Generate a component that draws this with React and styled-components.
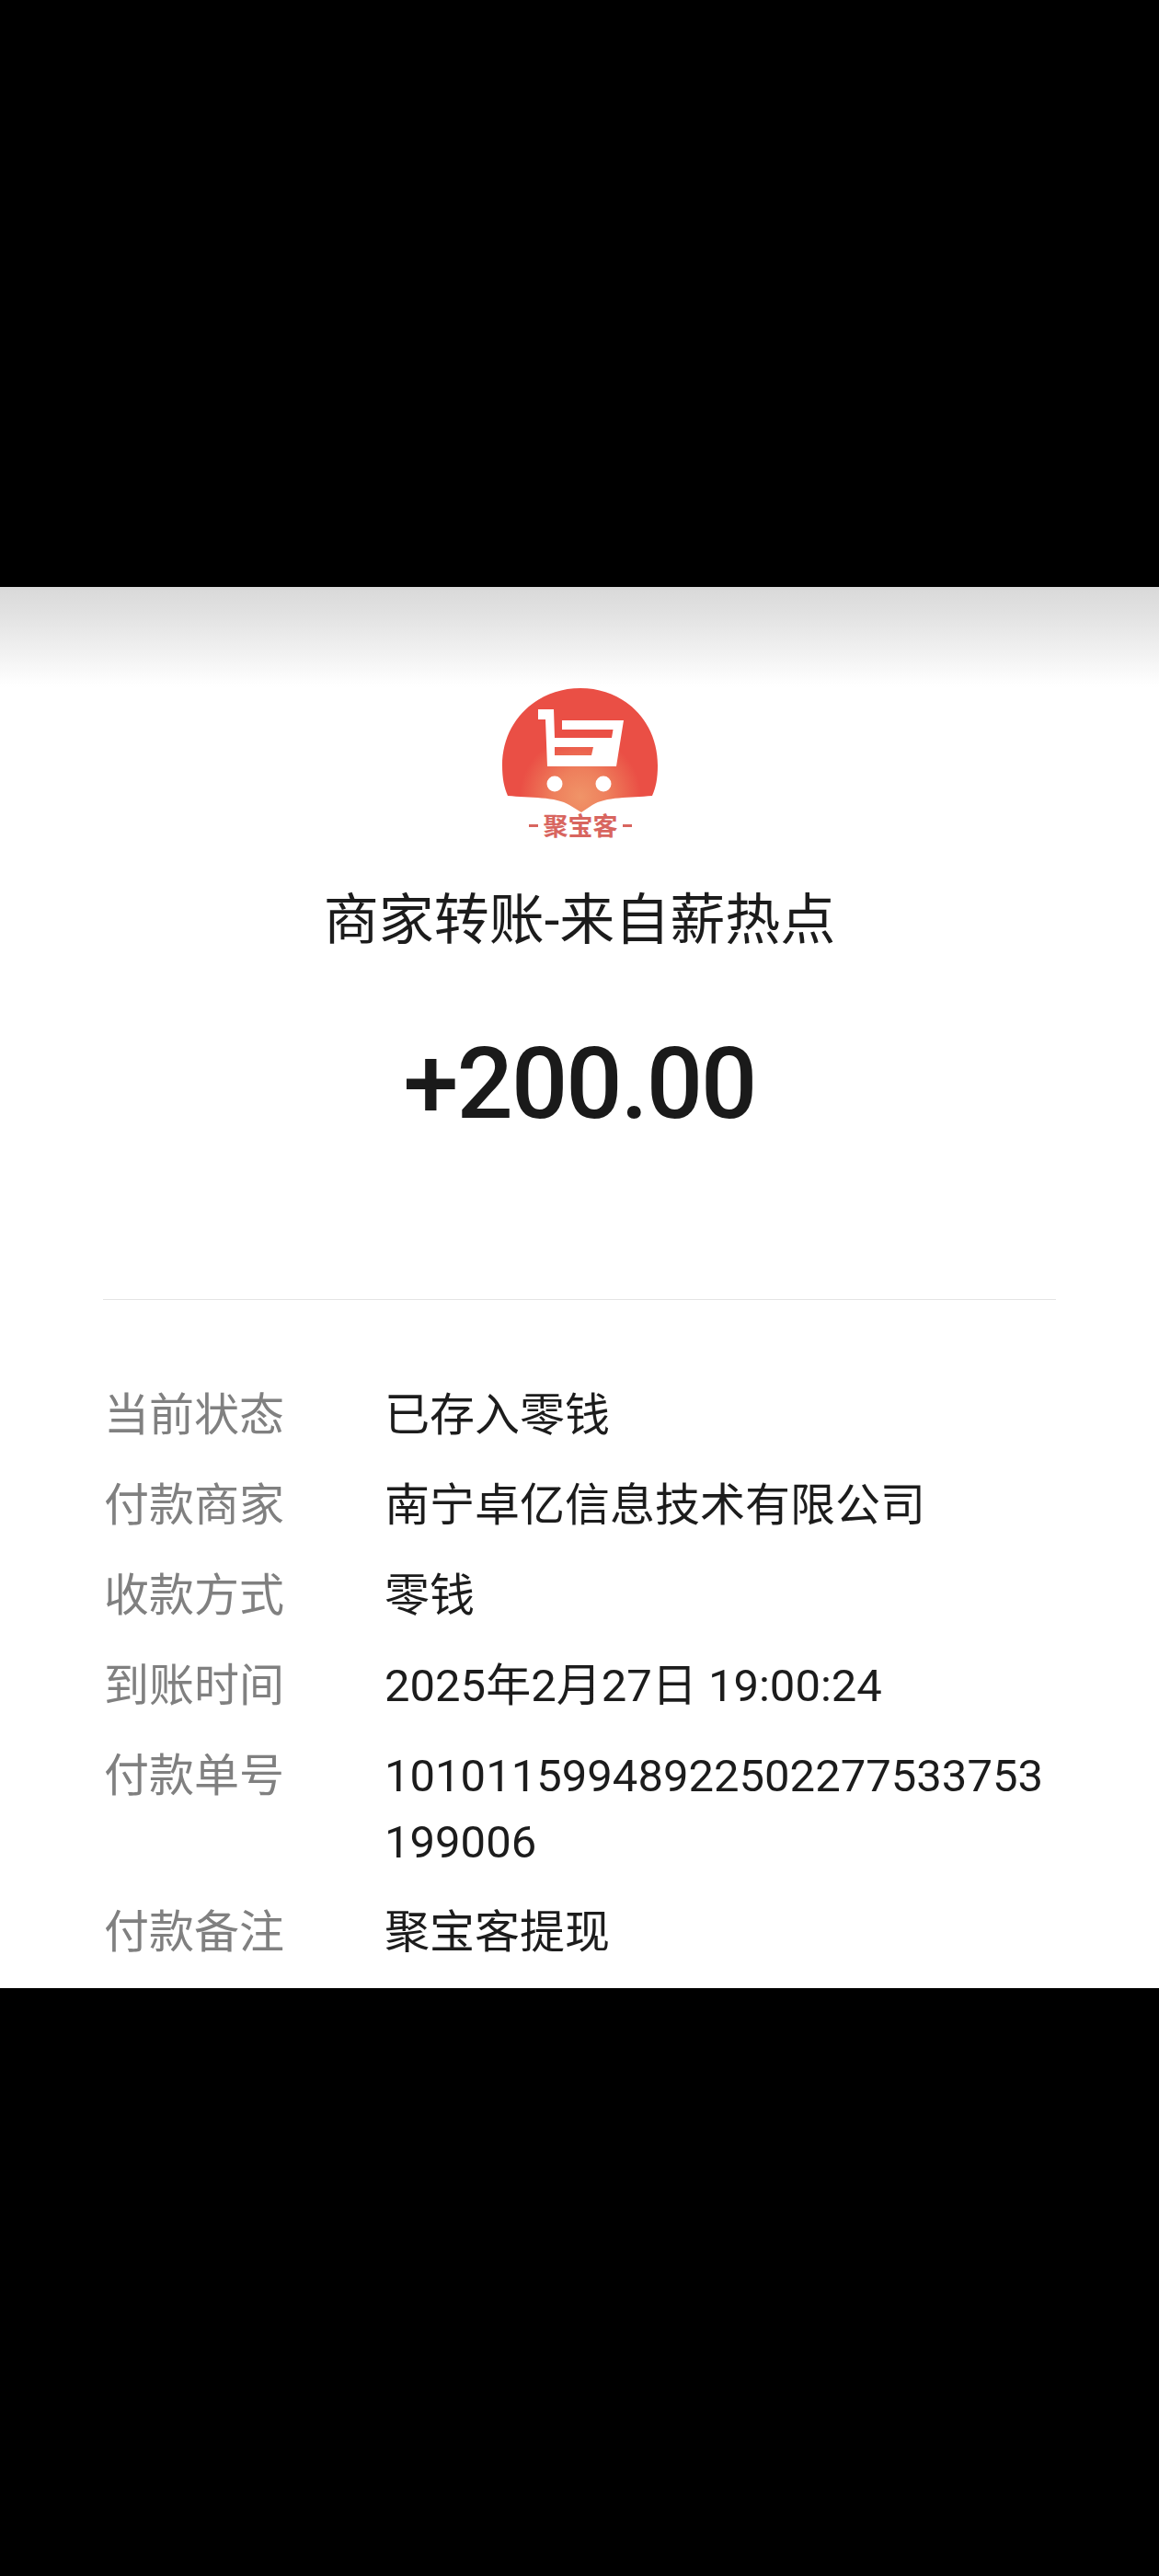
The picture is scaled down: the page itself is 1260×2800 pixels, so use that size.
import React from 'react';
import styled, { createGlobalStyle } from 'styled-components';

const GlobalStyle = createGlobalStyle`
	html, body {
		margin: 0;
		padding: 0;
		background: #000;
	}
	body {
		font-family: Roboto, "Noto Sans CJK SC", sans-serif;
	}
`;

const Screen = styled.div`
	width: 1260px;
	height: 2800px;
	padding-top: 638px;
	box-sizing: border-box;
	background: #000;
`;

const Sheet = styled.main`
	height: 1523px;
	box-sizing: border-box;
	padding-top: 110px;
	display: flex;
	flex-direction: column;
	align-items: center;
	background: linear-gradient(#d9d9d9 0, #e2e2e2 30px, #fefefe 105px, #fff 110px);
`;

const Logo = styled.svg`
	display: block;
	width: 172px;
	height: 168px;
`;

const Title = styled.h1`
	margin: 49px 0 0;
	font-size: 60px;
	line-height: 72px;
	font-weight: 400;
	color: #1c1c1c;
`;

const Amount = styled.div`
	margin-top: 81px;
	font-size: 108px;
	line-height: 120px;
	font-weight: 500;
	letter-spacing: -2px;
	color: #1a1a1a;
`;

const Divider = styled.hr`
	align-self: stretch;
	margin: 174px 112px 0;
	border: 0;
	height: 1px;
	background: #e4e4e4;
`;

const Details = styled.dl`
	align-self: stretch;
	margin: 90px 112px 0 113px;
	display: grid;
	grid-template-columns: 305px 1fr;
	row-gap: 26px;
	font-size: 49px;
	line-height: 72px;
`;

const Label = styled.dt`
	color: #808080;
`;

const Value = styled.dd`
	margin: 0;
	color: #1c1c1c;
	word-break: break-all;
`;

const rows = [
	{ label: '当前状态', value: '已存入零钱' },
	{ label: '付款商家', value: '南宁卓亿信息技术有限公司' },
	{ label: '收款方式', value: '零钱' },
	{ label: '到账时间', value: '2025年2月27日 19:00:24' },
	{ label: '付款单号', value: '10101159948922502277533753199006' },
	{ label: '付款备注', value: '聚宝客提现' },
];

const BrandLogo = () => (
	<Logo viewBox="-1 0 172 168" aria-label="聚宝客">
		<defs>
			<radialGradient id="glow" gradientUnits="userSpaceOnUse" cx="86" cy="118" r="66">
				<stop offset="0%" stopColor="#f09468" />
				<stop offset="45%" stopColor="#ee7f5c" />
				<stop offset="100%" stopColor="#ea4f45" />
			</radialGradient>
		</defs>
		<path
			d="M86 0C38 0 1 36 1 84C1 98 3 108 7 117C30 119 60 118 74 127L87 135L99 127C113 118 140 119 164 117C168 108 170 98 170 84C170 36 134 0 86 0Z"
			fill="url(#glow)"
		/>
		<path
			d="M40 23H57L58 54H120L121.5 45H66V35H133L125 85H50L48 34H40Z M58 64H100L98 73H58Z"
			fill="#fff"
			fillRule="evenodd"
		/>
		<circle cx="58" cy="104" r="8.5" fill="#fff" />
		<circle cx="111" cy="104" r="8.5" fill="#fff" />
		<rect x="30" y="148" width="10" height="3" fill="#d8655f" />
		<rect x="132" y="148" width="10" height="3" fill="#d8655f" />
		<text
			x="86"
			y="160"
			textAnchor="middle"
			fontSize="27"
			fontWeight="700"
			fill="#d8655f"
			fontFamily='"Noto Sans CJK SC", sans-serif'
		>
			聚宝客
		</text>
	</Logo>
);

const App = () => {
	return (
		<>
			<GlobalStyle />
			<Screen>
				<Sheet>
					<BrandLogo />
					<Title>商家转账-来自薪热点</Title>
					<Amount>+200.00</Amount>
					<Divider />
					<Details>
						{rows.map((row) => (
							<React.Fragment key={row.label}>
								<Label>{row.label}</Label>
								<Value>{row.value}</Value>
							</React.Fragment>
						))}
					</Details>
				</Sheet>
			</Screen>
		</>
	);
};

export default App;
